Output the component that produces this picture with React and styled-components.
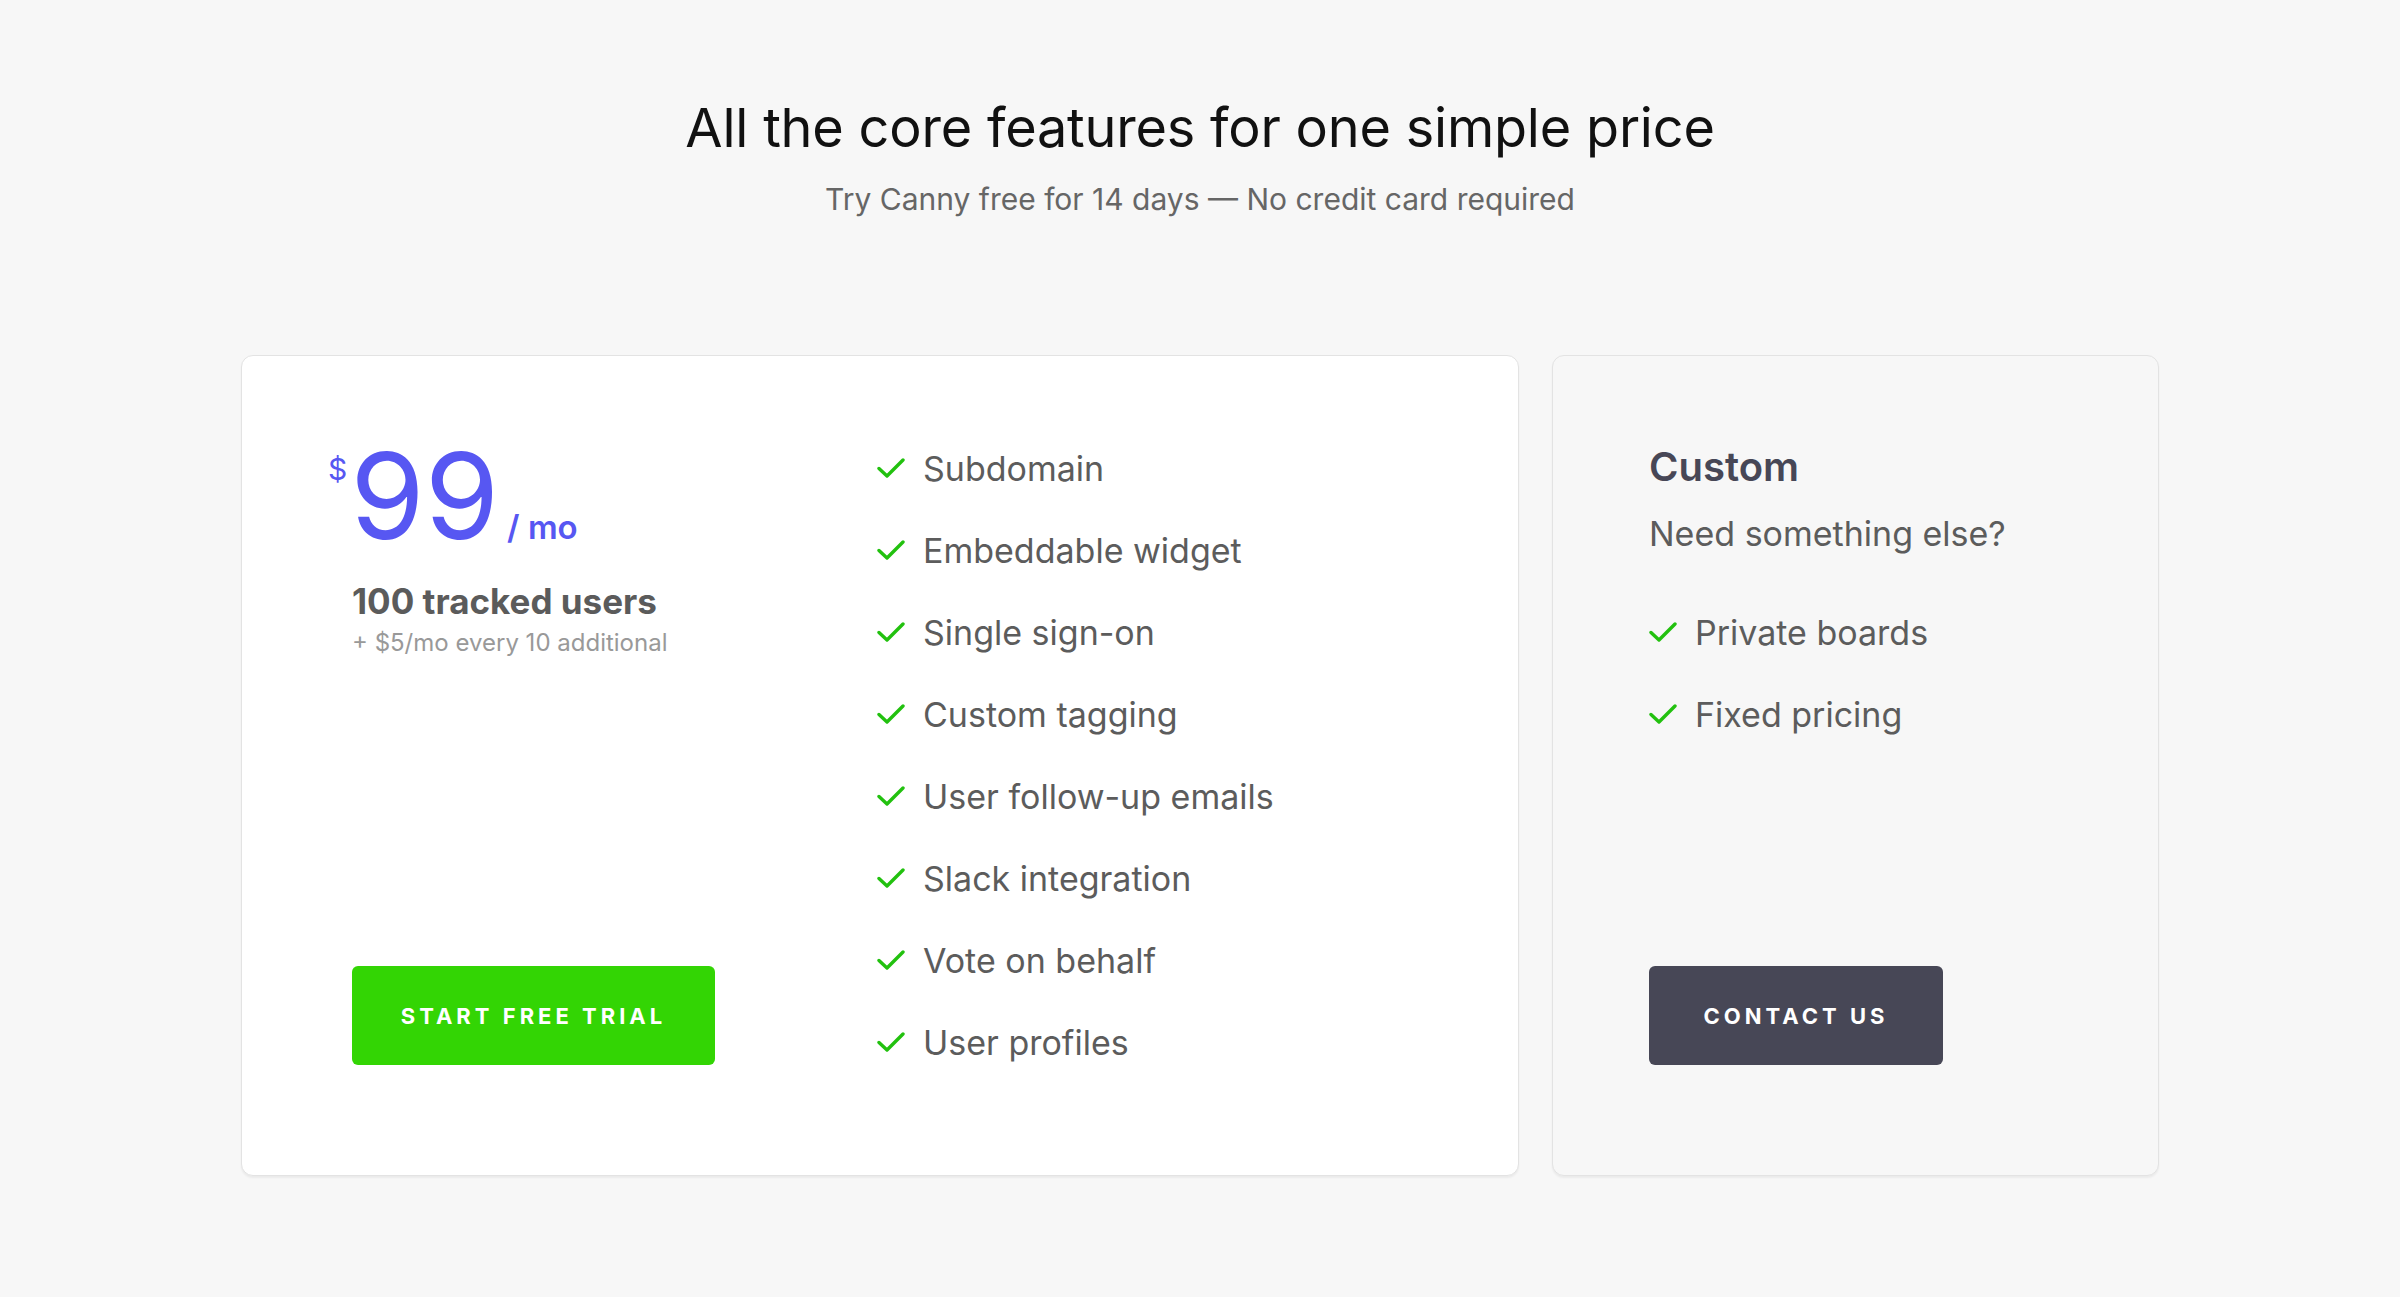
import React from "react";
import styled, { createGlobalStyle } from "styled-components";

const GlobalStyle = createGlobalStyle`
  html, body {
    margin: 0;
    padding: 0;
    background: #f7f7f7;
  }
  body {
    font-family: Inter, "Noto Sans", "Liberation Sans", sans-serif;
    -webkit-font-smoothing: antialiased;
  }
`;

const features = [
  "Subdomain",
  "Embeddable widget",
  "Single sign-on",
  "Custom tagging",
  "User follow-up emails",
  "Slack integration",
  "Vote on behalf",
  "User profiles",
];

const customFeatures = ["Private boards", "Fixed pricing"];

const Check = () => (
  <CheckIcon viewBox="0 0 28 22" fill="none">
    <polyline
      points="2,11.5 10,19 26,3"
      stroke="#22c10f"
      strokeWidth="3.4"
      strokeLinecap="round"
      strokeLinejoin="round"
    />
  </CheckIcon>
);

const App = () => {
  return (
    <Page>
      <GlobalStyle />
      <Header>
        <Title>All the core features for one simple price</Title>
        <Subtitle>Try Canny free for 14 days — No credit card required</Subtitle>
      </Header>

      <Cards>
        <MainCard>
          <PriceCol>
            <PriceRow>
              <Currency>$</Currency>
              <Amount>99</Amount>
              <Per>/ mo</Per>
            </PriceRow>
            <Users>100 tracked users</Users>
            <Extra>+ $5/mo every 10 additional</Extra>
            <Button $bg="#33d504">Start free trial</Button>
          </PriceCol>

          <FeatureList>
            {features.map((f) => (
              <Feature key={f}>
                <Check />
                <span>{f}</span>
              </Feature>
            ))}
          </FeatureList>
        </MainCard>

        <CustomCard>
          <CardTitle>Custom</CardTitle>
          <CardSub>Need something else?</CardSub>
          <FeatureList>
            {customFeatures.map((f) => (
              <Feature key={f}>
                <Check />
                <span>{f}</span>
              </Feature>
            ))}
          </FeatureList>
          <Button $bg="#474756" $narrow>
            Contact us
          </Button>
        </CustomCard>
      </Cards>
    </Page>
  );
};

const Page = styled.div`
  min-height: 1297px;
  box-sizing: border-box;
  padding-top: 97px;
  background: #f7f7f7;
`;

const Header = styled.div`
  display: flex;
  flex-direction: column;
  align-items: center;
`;

const Title = styled.h1`
  margin: 0;
  font-size: 54px;
  line-height: 62px;
  font-weight: 400;
  color: #111;
  letter-spacing: -0.2px;
`;

const Subtitle = styled.p`
  margin: 22px 0 0;
  font-size: 30px;
  line-height: 36px;
  color: #666;
`;

const Cards = styled.div`
  display: flex;
  align-items: stretch;
  gap: 33px;
  width: 1918px;
  margin: 138px auto 0;
`;

const Card = styled.div`
  box-sizing: border-box;
  border: 1.5px solid #e3e3e3;
  border-radius: 12px;
  box-shadow: 0 2px 2px rgba(0, 0, 0, 0.05);
  padding: 71px 0 92px;
`;

const MainCard = styled(Card)`
  width: 1278px;
  background: #fff;
  display: grid;
  grid-template-columns: 525px 1fr;
  padding-left: 110px;
`;

const CustomCard = styled(Card)`
  width: 607px;
  background: #f7f7f7;
  display: flex;
  flex-direction: column;
  padding-left: 96px;
`;

const PriceCol = styled.div`
  display: flex;
  flex-direction: column;
  align-items: flex-start;
`;

const PriceRow = styled.div`
  display: flex;
  align-items: baseline;
  margin-top: 9px;
  margin-left: -24px;
  color: #5757f2;
`;

const Currency = styled.span`
  align-self: flex-start;
  font-size: 30px;
  line-height: 1;
  margin-top: 18px;
  margin-right: 3px;
`;

const Amount = styled.span`
  font-size: 120px;
  line-height: 1;
  font-weight: 400;
`;

const Per = styled.span`
  font-size: 33px;
  line-height: 1;
  font-weight: 600;
  margin-left: 8px;
`;

const Users = styled.div`
  margin-top: 24px;
  font-size: 35px;
  line-height: 42px;
  font-weight: 700;
  color: #5b5b5b;
`;

const Extra = styled.div`
  margin-top: 6px;
  font-size: 24px;
  line-height: 30px;
  color: #999;
`;

const Button = styled.button`
  margin-top: auto;
  margin-bottom: 18px;
  width: ${(p) => (p.$narrow ? "294px" : "363px")};
  height: 99px;
  border: none;
  border-radius: 6px;
  background: ${(p) => p.$bg};
  color: #fff;
  font-family: Inter, "Liberation Sans", sans-serif;
  font-size: 22px;
  font-weight: 700;
  letter-spacing: 4px;
  text-transform: uppercase;
  cursor: pointer;
`;

const FeatureList = styled.ul`
  list-style: none;
  margin: 0;
  padding: 0;
`;

const Feature = styled.li`
  display: flex;
  align-items: center;
  gap: 18px;
  height: 82px;
  font-size: 34px;
  color: #5c5c5c;
`;

const CheckIcon = styled.svg`
  width: 28px;
  height: 22px;
  flex-shrink: 0;
`;

const CardTitle = styled.h3`
  margin: 0;
  font-size: 40px;
  line-height: 80px;
  font-weight: 600;
  color: #474756;
`;

const CardSub = styled.p`
  margin: 0 0 30px;
  font-size: 34px;
  line-height: 54px;
  color: #5c5c5c;
`;

export default App;
